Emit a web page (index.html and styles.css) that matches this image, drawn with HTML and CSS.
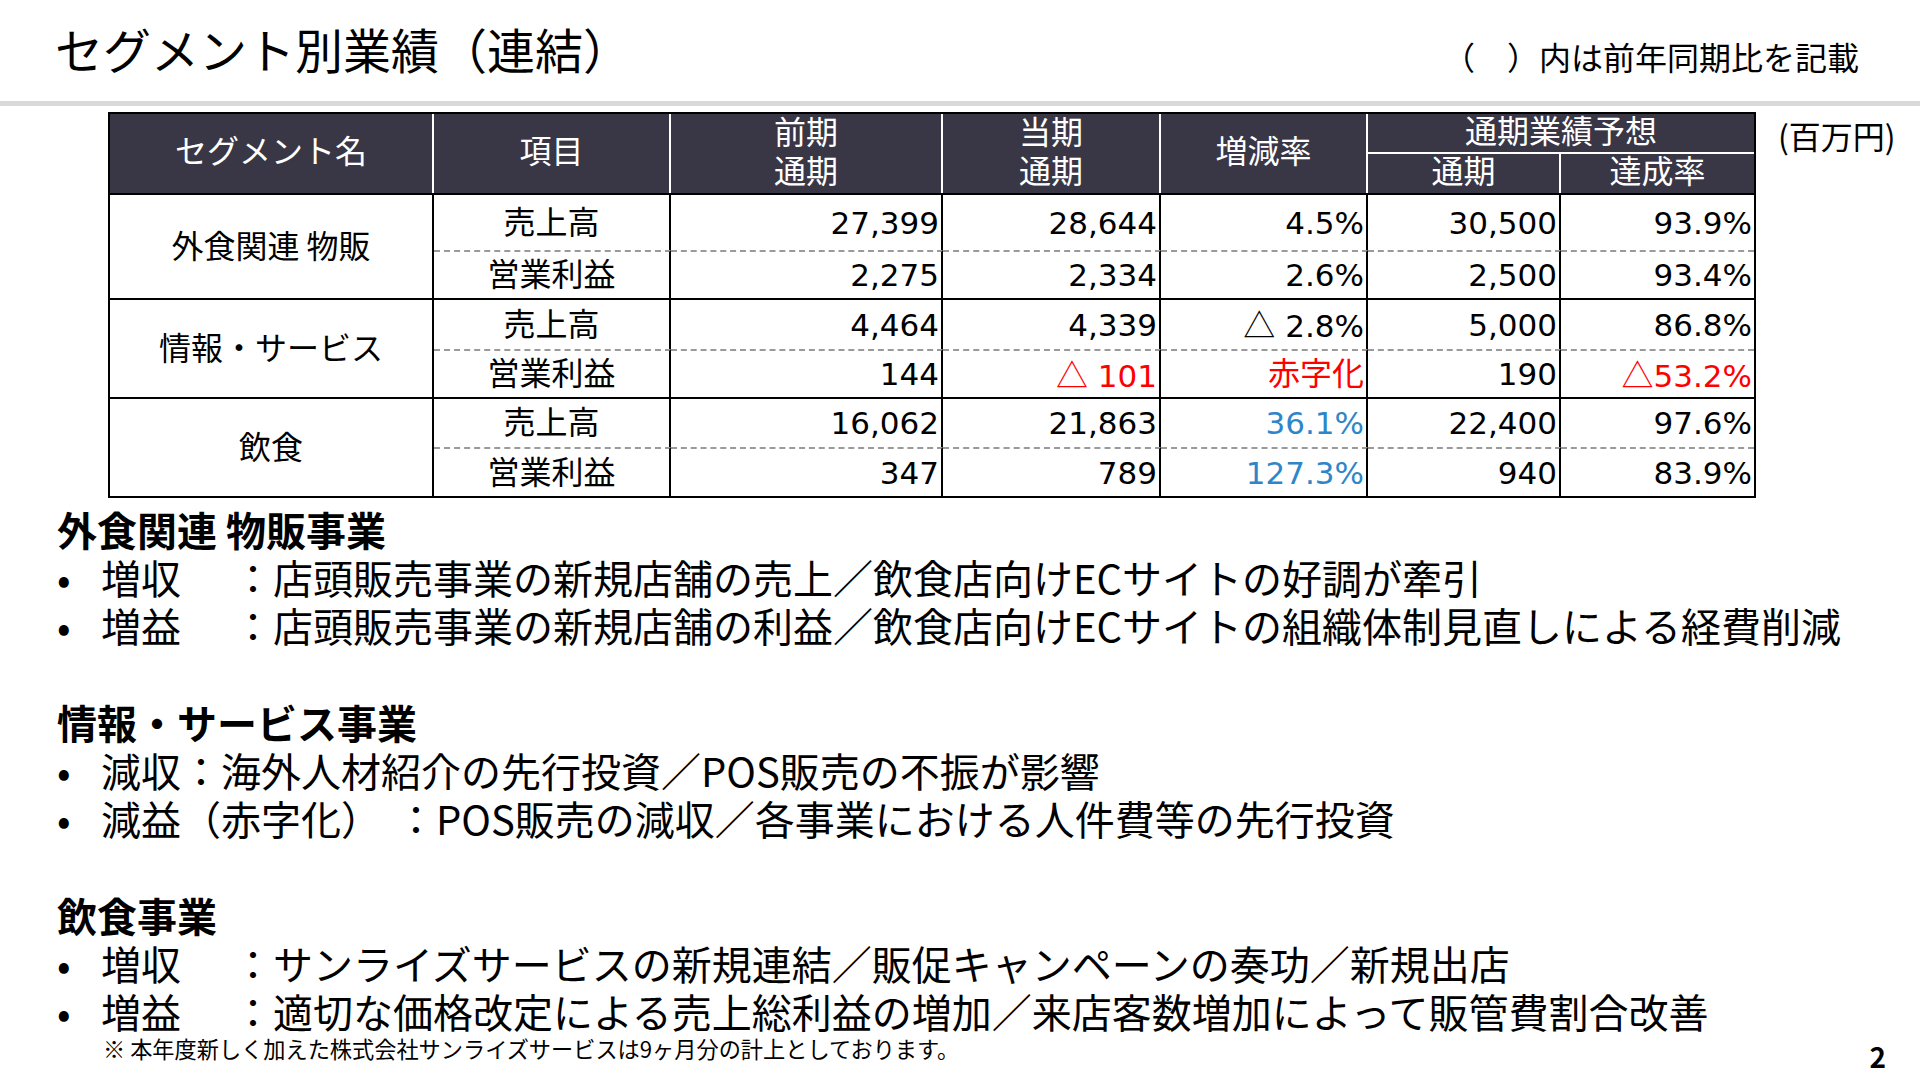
FILE: index.html
```html
<!DOCTYPE html>
<html lang="ja">
<head>
<meta charset="utf-8">
<title>セグメント別業績（連結）</title>
<link rel="stylesheet" href="styles.css">
</head>
<body>
<div class="slide">
  <header class="top">
    <h1 class="title">セグメント別業績（連結）</h1>
    <div class="note">（　）内は前年同期比を記載</div>
  </header>
  <div class="band"></div>

  <div class="table-row">
    <table class="seg-table">
      <colgroup>
        <col class="c-name"><col class="c-item"><col class="c-prev"><col class="c-cur"><col class="c-rate"><col class="c-fc"><col class="c-ach">
      </colgroup>
      <thead>
        <tr class="h1">
          <th rowspan="2"><span class="hd">セグメント名</span></th>
          <th rowspan="2"><span class="hd">項目</span></th>
          <th rowspan="2" class="two"><span class="hd">前期<br>通期</span></th>
          <th rowspan="2" class="two"><span class="hd">当期<br>通期</span></th>
          <th rowspan="2"><span class="hd">増減率</span></th>
          <th colspan="2" class="fc"><span class="hd">通期業績予想</span></th>
        </tr>
        <tr class="h2">
          <th class="sub"><span class="hd">通期</span></th>
          <th class="sub last"><span class="hd">達成率</span></th>
        </tr>
      </thead>
      <tbody>
        <tr class="r-top r1">
          <td rowspan="2" class="name">外食関連 物販</td>
          <td class="item">売上高</td>
          <td class="num">27,399</td>
          <td class="num">28,644</td>
          <td class="num">4.5%</td>
          <td class="num">30,500</td>
          <td class="num last">93.9%</td>
        </tr>
        <tr class="r-bot r2">
          <td class="item">営業利益</td>
          <td class="num">2,275</td>
          <td class="num">2,334</td>
          <td class="num">2.6%</td>
          <td class="num">2,500</td>
          <td class="num last">93.4%</td>
        </tr>
      </tbody>
      <tbody>
        <tr class="r-top r3">
          <td rowspan="2" class="name">情報・サービス</td>
          <td class="item">売上高</td>
          <td class="num">4,464</td>
          <td class="num">4,339</td>
          <td class="num"><span class="tri">△</span> 2.8%</td>
          <td class="num">5,000</td>
          <td class="num last">86.8%</td>
        </tr>
        <tr class="r-bot r4">
          <td class="item">営業利益</td>
          <td class="num">144</td>
          <td class="num red"><span class="tri">△</span> 101</td>
          <td class="num red cjk">赤字化</td>
          <td class="num">190</td>
          <td class="num red last"><span class="tri">△</span>53.2%</td>
        </tr>
      </tbody>
      <tbody>
        <tr class="r-top r5">
          <td rowspan="2" class="name">飲食</td>
          <td class="item">売上高</td>
          <td class="num">16,062</td>
          <td class="num">21,863</td>
          <td class="num blue">36.1%</td>
          <td class="num">22,400</td>
          <td class="num last">97.6%</td>
        </tr>
        <tr class="r-bot r6">
          <td class="item">営業利益</td>
          <td class="num">347</td>
          <td class="num">789</td>
          <td class="num blue">127.3%</td>
          <td class="num">940</td>
          <td class="num last">83.9%</td>
        </tr>
      </tbody>
    </table>
    <div class="unit">(百万円)</div>
  </div>

  <div class="sections">
    <section class="sec">
      <div class="sec-h">外食関連 物販事業</div>
      <div class="li"><span class="bul">•</span><span class="lbl tab">増収</span><span>：店頭販売事業の新規店舗の売上／飲食店向けECサイトの好調が牽引</span></div>
      <div class="li"><span class="bul">•</span><span class="lbl tab">増益</span><span>：店頭販売事業の新規店舗の利益／飲食店向けECサイトの組織体制見直しによる経費削減</span></div>
    </section>
    <section class="sec">
      <div class="sec-h">情報・サービス事業</div>
      <div class="li"><span class="bul">•</span><span>減収：海外人材紹介の先行投資／POS販売の不振が影響</span></div>
      <div class="li"><span class="bul">•</span><span class="lbl wide">減益（赤字化）</span><span>：POS販売の減収／各事業における人件費等の先行投資</span></div>
    </section>
    <section class="sec">
      <div class="sec-h">飲食事業</div>
      <div class="li"><span class="bul">•</span><span class="lbl tab">増収</span><span>：サンライズサービスの新規連結／販促キャンペーンの奏功／新規出店</span></div>
      <div class="li"><span class="bul">•</span><span class="lbl tab">増益</span><span>：適切な価格改定による売上総利益の増加／来店客数増加によって販管費割合改善</span></div>
    </section>
  </div>

  <footer class="foot">
    <div class="foot-note">※ 本年度新しく加えた株式会社サンライズサービスは9ヶ月分の計上としております。</div>
    <div class="page">2</div>
  </footer>
</div>
</body>
</html>
```

FILE: styles.css
```css
html, body {
  margin: 0;
  padding: 0;
  background: #ffffff;
}

body {
  font-family: "Noto Sans CJK JP", sans-serif;
  color: #000000;
  text-spacing-trim: space-all;
}

.slide {
  width: 1920px;
  height: 1080px;
  overflow: hidden;
  background: #ffffff;
}

/* ---------- header ---------- */
.top {
  display: flex;
  justify-content: space-between;
  align-items: flex-start;
  height: 101px;
  box-sizing: border-box;
  padding: 17px 61px 0 55px;
}

.title {
  margin: 0;
  font-size: 48px;
  line-height: 62px;
  font-weight: 400;
}

.note {
  margin-top: 18px;
  font-size: 32px;
  line-height: 42px;
}

.band {
  height: 5px;
  background: #d9d9d9;
}

/* ---------- table ---------- */
.table-row {
  display: flex;
  align-items: flex-start;
  gap: 22px;
  margin: 6px 0 0 108px;
}

.seg-table {
  width: 1646px;
  table-layout: fixed;
  border-collapse: separate;
  border-spacing: 0;
  border: 2px solid #000000;
  font-size: 32px;
}

.c-name { width: 324px; }
.c-item { width: 237px; }
.c-prev { width: 272px; }
.c-cur  { width: 218px; }
.c-rate { width: 207px; }
.c-fc   { width: 193px; }
.c-ach  { width: 193px; }

.seg-table th {
  background: #393646;
  color: #ffffff;
  font-weight: 400;
  line-height: 39px;
  padding: 0;
  border-right: 2px solid #ffffff;
  text-align: center;
  vertical-align: middle;
}

.seg-table th .hd {
  display: block;
  margin-top: -8px;
}

.seg-table th.fc,
.seg-table th.last {
  border-right: none;
}

.seg-table th.fc {
  border-bottom: 2px solid #ffffff;
}

.seg-table .h1 { height: 40px; }
.seg-table .h2 { height: 39px; }

.seg-table td {
  padding: 0;
  line-height: 40px;
  vertical-align: middle;
  border-right: 2px solid #000000;
  white-space: nowrap;
}

.seg-table td.last {
  border-right: none;
}

.seg-table .r-top td {
  border-top: 2px solid #000000;
}

.seg-table .r-bot td {
  border-top: 2px dashed #9a9a9a;
}

.seg-table .r1 { height: 57px; }
.seg-table .r2 { height: 48px; }
.seg-table .r3 { height: 51px; }
.seg-table .r4 { height: 48px; }
.seg-table .r5 { height: 50px; }
.seg-table .r6 { height: 49px; }

.seg-table td.name,
.seg-table td.item,
.seg-table td.cjk {
  line-height: 38px;
  padding-bottom: 6px;
}

.seg-table td.name,
.seg-table td.item {
  text-align: center;
}

.seg-table td.num {
  text-align: right;
  padding-right: 2px;
  font-family: "DejaVu Sans", "Noto Sans CJK JP", sans-serif;
  font-size: 31px;
}

.seg-table td.cjk,
.tri {
  font-family: "Noto Sans CJK JP", sans-serif;
  font-size: 32px;
}

.red { color: #ff0000; }
.blue { color: #2e86c8; }

.unit {
  margin-top: 3px;
  font-size: 32px;
  line-height: 40px;
  white-space: nowrap;
}

/* ---------- sections ---------- */
.sections {
  margin-top: 7px;
  padding-left: 57px;
  font-size: 40px;
  line-height: 48.2px;
}

.sec + .sec {
  margin-top: 48.2px;
}

.sec-h {
  font-weight: 700;
}

.li {
  display: flex;
  white-space: nowrap;
}

.bul {
  width: 44px;
  flex: none;
}

.lbl {
  flex: none;
}

.lbl.tab { width: 132px; }
.lbl.wide { width: 295px; }

/* ---------- footer ---------- */
.foot {
  display: flex;
  justify-content: space-between;
  align-items: flex-end;
  padding: 0 34px 0 103px;
}

.foot-note {
  font-size: 22.2px;
  line-height: 26px;
  white-space: nowrap;
}

.page {
  font-size: 28px;
  line-height: 30px;
  font-weight: 700;
  margin-bottom: -10px;
}
```
